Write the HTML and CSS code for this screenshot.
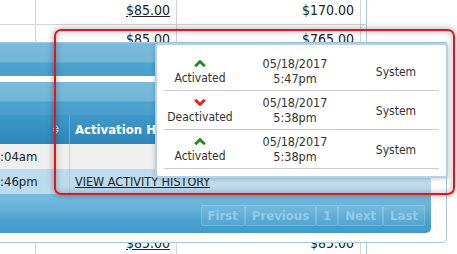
FILE: index.html
```html
<!DOCTYPE html>
<html>
<head>
<meta charset="utf-8">
<link rel="stylesheet" href="styles.css">
</head>
<body>
<div class="page">
  <div class="sheet">
    <div class="cell c0"></div>
    <div class="cell c1"><a class="amt">$85.00</a></div>
    <div class="cell c2">$170.00</div>
    <div class="cell c3"></div>
    <div class="cell c4"></div>

    <div class="cell c0"></div>
    <div class="cell c1"><a class="amt">$85.00</a></div>
    <div class="cell c2">$765.00</div>
    <div class="cell c3"></div>
    <div class="cell c4"></div>

    <div class="cell c0 blank"></div>
    <div class="cell c1 blank"></div>
    <div class="cell c2 blank"></div>
    <div class="cell c3 blank"></div>
    <div class="cell c4 blank"></div>

    <div class="cell c0 blank"></div>
    <div class="cell c1 blank"><a class="amt">$85.00</a></div>
    <div class="cell c2 blank">$85.00</div>
    <div class="cell c3 blank"></div>
    <div class="cell c4 blank"></div>
  </div>

  <div class="window">
    <div class="grid">
      <div class="band"></div>
      <div class="band"></div>
      <div class="thead">
        <div class="th th1">
          <svg class="sort" width="6" height="9" viewBox="0 0 6 9"><path d="M3 0.5 L5.5 3.5 H0.5 Z M3 8.5 L5.5 5.5 H0.5 Z" fill="none" stroke="#cfe6f3" stroke-width="1"/></svg>
        </div>
        <div class="th th2">Activation History</div>
      </div>
      <div class="tr odd">
        <div class="td td1">:04am</div>
        <div class="td td2"></div>
      </div>
      <div class="tr even">
        <div class="td td1">:46pm</div>
        <div class="td td2"><a class="link">VIEW ACTIVITY HISTORY</a></div>
      </div>
      <div class="pager">
        <span class="pbtn">First</span><span class="pbtn">Previous</span><span class="pbtn">1</span><span class="pbtn">Next</span><span class="pbtn">Last</span>
      </div>
    </div>
  </div>

  <div class="highlight"></div>

  <div class="popup">
    <div class="prow">
      <div class="pc status">
        <svg class="arrow" width="12" height="7" viewBox="0 0 12 7"><polyline points="1.2,6.2 6,1.6 10.8,6.2" fill="none" stroke="#1d8a1d" stroke-width="2.8"/></svg>
        <span>Activated</span>
      </div>
      <div class="pc date"><span>05/18/2017</span><span>5:47pm</span></div>
      <div class="pc who">System</div>
    </div>
    <div class="prow">
      <div class="pc status">
        <svg class="arrow" width="12" height="7" viewBox="0 0 12 7"><polyline points="1.2,0.8 6,5.4 10.8,0.8" fill="none" stroke="#e51b1b" stroke-width="2.8"/></svg>
        <span>Deactivated</span>
      </div>
      <div class="pc date"><span>05/18/2017</span><span>5:38pm</span></div>
      <div class="pc who">System</div>
    </div>
    <div class="prow">
      <div class="pc status">
        <svg class="arrow" width="12" height="7" viewBox="0 0 12 7"><polyline points="1.2,6.2 6,1.6 10.8,6.2" fill="none" stroke="#1d8a1d" stroke-width="2.8"/></svg>
        <span>Activated</span>
      </div>
      <div class="pc date"><span>05/18/2017</span><span>5:38pm</span></div>
      <div class="pc who">System</div>
    </div>
  </div>
</div>
</body>
</html>
```

FILE: styles.css
```css
* { box-sizing: border-box; }
html, body { margin: 0; padding: 0; background: #fff; }
body {
  font-family: "DejaVu Sans Condensed", "DejaVu Sans", sans-serif;
  color: #222;
}
.page {
  position: relative;
  width: 457px;
  height: 254px;
  overflow: hidden;
}

/* background sheet */
.sheet {
  display: grid;
  grid-template-columns: 36px 141px 184px 6px 1fr;
  grid-template-rows: 29px 29px 1fr 22px;
  height: 258px;
  margin-top: -4px;
}
.cell {
  border-right: 1px solid #d4d4d4;
  border-bottom: 1px solid #d4d4d4;
  display: flex;
  align-items: center;
  justify-content: flex-end;
  padding-right: 6px;
  font-size: 14px;
  color: #222;
}
.cell.blank { border-bottom: none; }
.c3 { border-right: 1px solid #a9cde4; padding: 0; }
.c4 { border-right: none; border-bottom: none; }
.amt { text-decoration: underline; color: #222; }

/* window with grid */
.window {
  position: absolute;
  left: -20px;
  top: 42px;
  width: 467px;
  height: 201px;
  border: 1px solid #a6c9e2;
  border-radius: 0 0 5px 5px;
  background: #fff;
  padding: 0 15px 9px 0;
}
.grid {
  height: 100%;
  display: flex;
  flex-direction: column;
  border-radius: 0 0 5px 0;
  overflow: hidden;
}
.band {
  height: 33px;
  flex: none;
  background: linear-gradient(#7bbbdb 0%, #72b6d8 58%, #4ea3ce 60%, #4a9fcc 100%);
}
.band + .band { margin-top: 6px; }
.thead {
  height: 29px;
  flex: none;
  display: flex;
  background: linear-gradient(#3f98c9, #2d87bc);
  color: #fff;
}
.th { display: flex; align-items: center; }
.th1 {
  width: 89px;
  border-right: 1px solid #67acd5;
  justify-content: flex-end;
  padding-right: 10px;
}
.th2 {
  flex: 1;
  padding-left: 5px;
  font-weight: bold;
  font-size: 13px;
  white-space: nowrap;
}
.tr {
  height: 25px;
  flex: none;
  display: flex;
  font-size: 13px;
  color: #222;
}
.tr.odd { background: #efefef; }
.tr.even { background: #bcdcee; }
.td { display: flex; align-items: center; }
.td1 { width: 89px; padding-left: 19px; border-right: 1px solid #cfcfcf; }
.tr.even .td1 { border-right-color: #a7cbe0; }
.td2 { flex: 1; padding-left: 5px; }
.link { text-decoration: underline; font-size: 12.5px; color: #222; white-space: nowrap; }
.pager {
  flex: 1;
  display: flex;
  justify-content: flex-end;
  align-items: center;
  padding: 4px 6px 0 0;
  background: linear-gradient(#78bcde 0%, #63b0d8 40%, #4aa1cf 70%, #3f9acb 100%);
}
.pbtn {
  display: block;
  height: 21px;
  line-height: 19px;
  padding: 0 6px;
  border: 1px solid rgba(255,255,255,0.18);
  background: rgba(255,255,255,0.08);
  border-radius: 2px;
  color: #92cbe8;
  font-weight: bold;
  font-size: 13px;
}

/* red highlight annotation */
.highlight {
  position: absolute;
  left: 54px;
  top: 29px;
  width: 401px;
  height: 166px;
  border: 2px solid #e3161d;
  border-radius: 7px;
  box-shadow: 0 0 6px 1px rgba(0,0,0,0.28), inset 0 0 6px 1px rgba(0,0,0,0.22);
}

/* popup */
.popup {
  position: absolute;
  left: 155px;
  top: 43px;
  width: 293px;
  height: 135px;
  border: 2px solid #b3d2e7;
  border-radius: 4px;
  background: #fff;
  padding: 7px 7px 0 7px;
  box-shadow: 0 1px 4px rgba(0,0,0,0.2);
  color: #333;
}
.prow {
  display: flex;
  height: 39px;
  border-bottom: 1px solid #cccccc;
}
.pc {
  display: flex;
  flex-direction: column;
  align-items: center;
  justify-content: center;
}
.status { width: 72px; font-size: 12px; line-height: 14px; padding-top: 3px; }
.arrow { display: block; margin-bottom: 4px; }
.date { width: 118px; font-size: 12.5px; line-height: 15px; }
.who { width: 84px; font-size: 12px; padding-top: 2px; }
```
